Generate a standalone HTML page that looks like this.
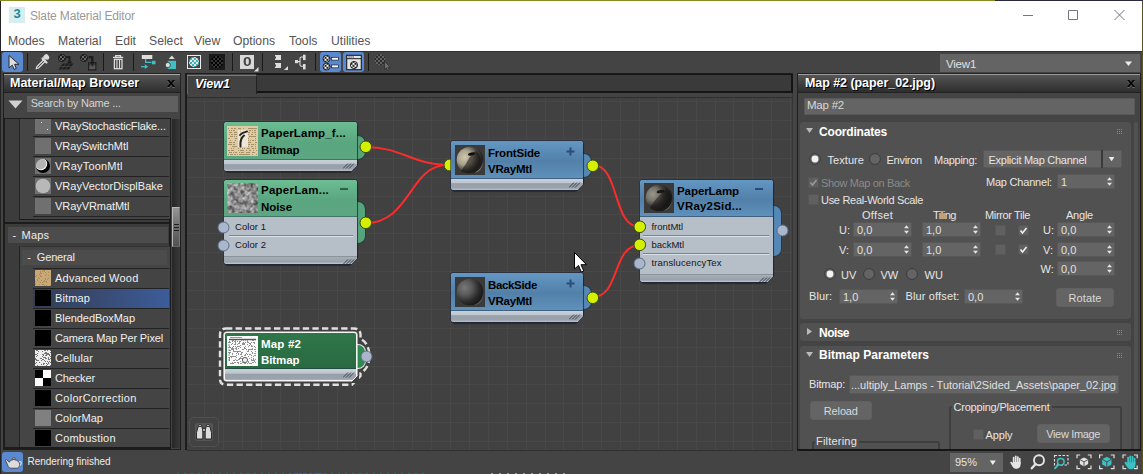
<!DOCTYPE html><html><head><meta charset="utf-8"><title>Slate Material Editor</title><style>
*{box-sizing:border-box;margin:0;padding:0}
html,body{width:1143px;height:474px;overflow:hidden;background:#444;font-family:"Liberation Sans",sans-serif;font-size:12px;color:#e6e6e6}
.a{position:absolute}
.t{position:absolute;white-space:nowrap;line-height:14px}
#top1{left:0;top:0;width:995px;height:1px;background:#8a8a22}
#top2{left:995px;top:0;width:148px;height:1px;background:#2a2a3a}
#title{left:1px;top:1px;width:1141px;height:50px;background:#fff}
#lb{left:0;top:1px;width:1px;height:473px;background:#222}
#rb{left:1142px;top:1px;width:1px;height:473px;background:#5a5222}
.menu{color:#555;font-size:12.2px;top:34px}
#toolbar{left:1px;top:51px;width:1141px;height:22px;background:#444;border-top:1px solid #303030}
.hdr{background:linear-gradient(#585858 0%,#484848 35%,#2e2e2e 100%);border:1px solid #222;color:#fff;font-weight:bold;font-size:12.5px;text-shadow:1px 1px 0 #000}
.inp{background:#646464;color:#ddd}
.row{left:33px;width:136px;height:18px;background:#444}
.sw{left:35px;width:16px;height:16px}
.lt{left:55px;color:#eee;font-size:12px}
</style></head><body>
<svg width="0" height="0" style="position:absolute"><defs><filter id="blur1" x="0" y="0" width="1" height="1"><feGaussianBlur stdDeviation="0.7"/></filter></defs></svg>
<div class="a" id="title"></div><div class="a" id="top1"></div><div class="a" id="top2"></div><div class="a" id="lb"></div><div class="a" id="rb"></div>
<div class="a" style="left:9px;top:7px;width:16px;height:16px;background:#d6eeee"></div><div class="t" style="left:13.500px;top:5.500px;color:#1a8a9c;font-weight:bold;font-size:13px;line-height:16px">3</div>
<div class="t" style="left:30px;top:8px;color:#999;font-size:12px;line-height:16px;letter-spacing:-0.150px">Slate Material Editor</div>
<svg class="a" style="left:1015px;top:5px" width="120" height="20" viewBox="0 0 120 20"><path d="M8 10.500h10M53.500 5.500h9v9h-9zM99.500 5l10 10M109.500 5l-10 10" stroke="#777" stroke-width="1" fill="none"/></svg>
<div class="t menu" style="left:8px">Modes</div>
<div class="t menu" style="left:58px">Material</div>
<div class="t menu" style="left:115px">Edit</div>
<div class="t menu" style="left:149px">Select</div>
<div class="t menu" style="left:194px">View</div>
<div class="t menu" style="left:233px">Options</div>
<div class="t menu" style="left:289px">Tools</div>
<div class="t menu" style="left:331px">Utilities</div>
<div class="a" id="toolbar"></div>
<div class="a" style="left:2px;top:52px;width:21px;height:20px;background:#5b89cf;border-radius:3px"></div>
<svg class="a" style="left:2px;top:52px" width="21" height="20" viewBox="0 0 21 20"><path d="M7 3.500V16l3.300-2.800 1.800 4.200 2.200-1-1.800-4.100H17z" fill="#dedede" stroke="#2a2a2a" stroke-width="1" stroke-linejoin="round"/></svg>
<div class="a" style="left:26.5px;top:53px;width:1.600px;height:18px;background:#1a1a1a"></div>
<div class="a" style="left:102.5px;top:53px;width:1.600px;height:18px;background:#1a1a1a"></div>
<div class="a" style="left:132.5px;top:53px;width:1.600px;height:18px;background:#1a1a1a"></div>
<div class="a" style="left:231.5px;top:53px;width:1.600px;height:18px;background:#1a1a1a"></div>
<div class="a" style="left:261.5px;top:53px;width:1.600px;height:18px;background:#1a1a1a"></div>
<div class="a" style="left:314.5px;top:53px;width:1.600px;height:18px;background:#1a1a1a"></div>
<div class="a" style="left:367.5px;top:53px;width:1.600px;height:18px;background:#1a1a1a"></div>
<svg class="a" style="left:34px;top:53px" width="18" height="18" viewBox="0 0 18 18"><path d="M2.200 15.800l.8-2.300 6.500-6.500 1.500 1.500-6.500 6.500z" fill="#3a3a3a" stroke="#dcdcdc" stroke-width="1.200" stroke-linejoin="round"/><path d="M8.500 5.500l4 4" stroke="#dcdcdc" stroke-width="2.200" stroke-linecap="round"/><path d="M11 6.800l2.600-2.600a1.800 1.800 0 0 0-2.600-2.600L8.900 4z" fill="#dcdcdc"/><circle cx="13" cy="4.500" r="2.300" fill="#dcdcdc"/></svg>
<svg class="a" style="left:57px;top:53px" width="18" height="18" viewBox="0 0 18 18"><defs><pattern id="ck0" width="4" height="4" patternUnits="userSpaceOnUse" x="1" y="1"><rect width="4" height="4" fill="#1e1e1e"/><rect width="2" height="2" fill="#6a6a6a"/><rect x="2" y="2" width="2" height="2" fill="#6a6a6a"/></pattern></defs><circle cx="5" cy="5" r="3.600" fill="url(#ck0)" stroke="#1e1e1e" stroke-width="1"/><path d="M9 3h4.500v5.500h1.800l-2.800 3.500-2.800-3.500h1.800v-3.500h-2.500z" fill="#1e1e1e"/><path d="M6 10.500h10.500l-4.500 6h-10.500z" fill="#1e1e1e"/><path d="M3.800 13.500h10.500M9 10.500l-4.500 6M12.800 10.500l-4.500 6" stroke="#484848" stroke-width="0.800"/></svg>
<svg class="a" style="left:79px;top:53px" width="18" height="18" viewBox="0 0 18 18"><circle cx="5" cy="5" r="3.600" fill="url(#ck0)" stroke="#1e1e1e" stroke-width="1"/><path d="M9.500 3h5v6h1.800l-3 3.800-3-3.800h1.800v-3.800h-2.600z" fill="#1e1e1e"/><path d="M9.700 9v7.800h7v-7.800" fill="none" stroke="#1e1e1e" stroke-width="1.400"/><path d="M10.300 12l3 2.500 3-2.500v4.200h-6z" fill="#5a5a5a"/></svg>
<svg class="a" style="left:110px;top:52px" width="16" height="20" viewBox="110 52 16 20"><path d="M115.700 57v-1.300h4.800v1.300M113 57.400h10.200" fill="none" stroke="#dcdcdc" stroke-width="1.300"/><rect x="114.400" y="59.300" width="7.600" height="9.400" fill="none" stroke="#dcdcdc" stroke-width="1.300"/><path d="M116.900 59.500v9M119.500 59.500v9" stroke="#dcdcdc" stroke-width="1.100"/></svg>
<svg class="a" style="left:139px;top:52px" width="19" height="20" viewBox="139 52 19 20"><rect x="141.800" y="55" width="10.500" height="4" fill="#dcdcdc"/><path d="M145.600 59v3.400h6" fill="none" stroke="#3cc0c4" stroke-width="1.200"/><rect x="152" y="60.800" width="3.500" height="3.500" fill="#3cc0c4"/><path d="M141 66.700h5" stroke="#3cc0c4" stroke-width="1.300"/><path d="M144.800 64.300l3.500 2.400-3.500 2.400z" fill="#3cc0c4"/></svg>
<svg class="a" style="left:163px;top:52px" width="15" height="20" viewBox="163 52 15 20"><path d="M171.800 55.500l3 3.500h-6z" fill="#dcdcdc"/><rect x="167.800" y="60.800" width="8.200" height="8.200" fill="#3cc0c4"/><circle cx="167.800" cy="65" r="2.600" fill="#dcdcdc" stroke="#333" stroke-width="0.800"/></svg>
<div class="a" style="left:187px;top:55px;width:14px;height:14px;background:#424242;border:1px solid #ececec"></div>
<svg class="a" style="left:187px;top:55px" width="14" height="14" viewBox="0 0 14 14"><defs><pattern id="ck1" width="4" height="4" patternUnits="userSpaceOnUse" x="1" y="1"><rect width="4" height="4" fill="#f0dedc"/><rect width="2" height="2" fill="#2cbcc6"/><rect x="2" y="2" width="2" height="2" fill="#2cbcc6"/></pattern></defs><circle cx="7" cy="7" r="5" fill="url(#ck1)"/></svg>
<div class="a" style="left:209px;top:54px;width:16px;height:16px;background:#1a1a1a"></div>
<svg class="a" style="left:209px;top:54px" width="16" height="16" viewBox="0 0 16 16"><defs><pattern id="ck2" width="4" height="4" patternUnits="userSpaceOnUse"><rect width="4" height="4" fill="#000"/><rect width="2" height="2" fill="#363636"/><rect x="2" y="2" width="2" height="2" fill="#363636"/></pattern></defs><circle cx="8" cy="8" r="6.200" fill="url(#ck2)"/></svg>
<div class="a" style="left:240px;top:55px;width:14px;height:14px;background:#d8d8d8"></div>
<div class="t" style="left:243px;top:55px;color:#444;font-weight:bold;font-size:13.500px;line-height:14px;transform:scaleX(1.150);transform-origin:0 0">0</div>
<svg class="a" style="left:254px;top:67px" width="5" height="5"><path d="M4.500 0v4.500h-4.500z" fill="#dcdcdc"/></svg>
<svg class="a" style="left:272px;top:53px" width="18" height="18" viewBox="0 0 18 18"><rect x="3" y="2" width="6" height="5" fill="#ddd"/><rect x="3" y="10" width="6" height="5" fill="#ddd"/><rect x="2" y="3.500" width="2" height="2" fill="#444"/><rect x="2" y="11.500" width="2" height="2" fill="#444"/><path d="M16 13v4h-4z" fill="#ddd"/></svg>
<svg class="a" style="left:293px;top:52px" width="16" height="20" viewBox="293 52 16 20"><rect x="295" y="60" width="3" height="3.200" fill="#dcdcdc"/><path d="M298 61.600h1.500M303 57h-1.500q-1.500 0-1.500 1.500v6.200q0 1.500 1.500 1.500h1.500" fill="none" stroke="#dcdcdc" stroke-width="1.100"/><rect x="303" y="54.700" width="2.600" height="5.400" fill="#dcdcdc"/><rect x="303" y="64" width="2.600" height="5.400" fill="#dcdcdc"/></svg>
<div class="a" style="left:320px;top:52px;width:21px;height:20px;background:#5b89cf;border-radius:3px"></div>
<svg class="a" style="left:320px;top:52px" width="21" height="20" viewBox="320 52 21 20"><defs><pattern id="ck3" width="4" height="4" patternUnits="userSpaceOnUse" x="0.500" y="0.800"><rect width="4" height="4" fill="#fff"/><rect width="2" height="2" fill="#1c1c1c"/><rect x="2" y="2" width="2" height="2" fill="#1c1c1c"/></pattern></defs><circle cx="326.500" cy="58.800" r="3.500" fill="url(#ck3)" stroke="#1c1c1c" stroke-width="0.900"/><circle cx="326.500" cy="66.600" r="3.500" fill="url(#ck3)" stroke="#1c1c1c" stroke-width="0.900"/><rect x="331.500" y="57.300" width="7" height="2.800" fill="#fff" stroke="#1c1c1c" stroke-width="0.700"/><rect x="331.500" y="65" width="7" height="2.800" fill="#fff" stroke="#1c1c1c" stroke-width="0.700"/></svg>
<div class="a" style="left:343px;top:52px;width:21px;height:20px;background:#5b89cf;border-radius:3px"></div>
<svg class="a" style="left:343px;top:52px" width="21" height="20" viewBox="343 52 21 20"><rect x="346.700" y="55.300" width="14.600" height="14.400" fill="#e4e4e4" stroke="#1c1c1c" stroke-width="1.100"/><path d="M346.700 58.700h14.600" stroke="#1c1c1c" stroke-width="1"/><path d="M348.500 57h1.200M350.500 57h1.200M352.500 57h1.200" stroke="#1c1c1c" stroke-width="1"/><circle cx="354" cy="65" r="3.600" fill="url(#ck3)" stroke="#1c1c1c" stroke-width="0.900"/></svg>
<svg class="a" style="left:372px;top:52px" width="22" height="20" viewBox="372 52 22 20"><defs><pattern id="ck4" width="4" height="4" patternUnits="userSpaceOnUse"><rect width="4" height="4" fill="#636363"/><rect width="2" height="2" fill="#2c2c2c"/><rect x="2" y="2" width="2" height="2" fill="#2c2c2c"/></pattern></defs><circle cx="380" cy="59.800" r="5.500" fill="url(#ck4)"/><path d="M384.500 61.500v8l1.900-1.600 1.300 2.800 1.500-.7-1.300-2.700h2.600z" fill="#6e6e6e" stroke="#303030" stroke-width="0.800"/></svg>
<div class="a" style="left:940px;top:54px;width:200px;height:18px;background:#646464"></div>
<div class="t" style="left:946px;top:57px;color:#e0e0e0;font-size:11.500px;letter-spacing:-0.2px">View1</div>
<svg class="a" style="left:1124px;top:61px" width="9" height="6"><path d="M1 0.500h7l-3.500 4.500z" fill="#eee"/></svg>
<div class="a" style="left:3px;top:74px;width:178px;height:376px;background:#444;border:1px solid #1e1e1e"></div>
<div class="a hdr" style="left:3px;top:73px;width:178px;height:20px"></div>
<div class="a" style="left:4px;top:74px;width:176px;height:1px;background:#a8a8a8"></div>
<div class="t" style="left:10px;top:76px;color:#fff;font-weight:bold;font-size:12.500px;text-shadow:1px 1px 0 #000;line-height:15px">Material/Map Browser</div>
<div class="t" style="left:167.300px;top:76px;color:#000;font-weight:bold;font-size:12px;text-shadow:0 1px 0 #666;line-height:15px;transform:scaleX(1.230);transform-origin:0 0">x</div>
<svg class="a" style="left:7.500px;top:99.500px" width="15" height="9"><path d="M0.500 0.500h14l-7 8z" fill="#d0d0d0"/></svg>
<div class="a" style="left:27px;top:96px;width:151px;height:16px;background:#606060"></div>
<div class="t" style="left:30.7px;top:95px;line-height:16px;font-size:11px;color:#d4d4d4;letter-spacing:-0.23px;">Search by Name ...</div>
<div class="a" style="left:4px;top:118px;width:167px;height:331px;background:#3c3c3c;border:1px solid #1c1c1c;border-right:2px solid #1c1c1c"></div>
<div class="a" style="left:172px;top:119px;width:8px;height:329px;background:linear-gradient(90deg,#262626,#3a3a3a)"></div>
<div class="a" style="left:172px;top:207px;width:8px;height:40px;background:linear-gradient(#949494,#6e6e6e 50%,#525252);border:1px solid #b8b8b8;border-right-color:#777;border-bottom-color:#666"></div>
<div class="a" style="left:174px;top:224px;width:5px;height:1px;background:#1e1e1e"></div><div class="a" style="left:174px;top:227px;width:5px;height:1px;background:#1e1e1e"></div><div class="a" style="left:174px;top:230px;width:5px;height:1px;background:#1e1e1e"></div>
<div class="a" style="left:19px;top:119px;width:151px;height:101px;background:#454545;border-left:1px solid #222;border-bottom:1px solid #1c1c1c"></div>
<div class="a" style="left:33px;top:117px;width:136px;height:20px;background:#444;border-bottom:1px solid #222"></div>
<div class="a sw" style="top:118px;background:#707070"></div>
<div class="t" style="left:55px;top:118px;line-height:16px;font-size:11px;color:#f0f0f0;letter-spacing:-0.13px;">VRayStochasticFlake...</div>
<div class="a" style="left:33px;top:137px;width:136px;height:20px;background:#444;border-bottom:1px solid #222"></div>
<div class="a sw" style="top:138px;background:#707070"></div>
<div class="t" style="left:55px;top:138px;line-height:16px;font-size:11px;color:#f0f0f0;letter-spacing:-0.05px;">VRaySwitchMtl</div>
<div class="a" style="left:33px;top:157px;width:136px;height:20px;background:#444;border-bottom:1px solid #222"></div>
<div class="a sw" style="top:158px;background:#707070"></div>
<div class="t" style="left:55px;top:158px;line-height:16px;font-size:11px;color:#f0f0f0;letter-spacing:0.2px;">VRayToonMtl</div>
<div class="a" style="left:33px;top:177px;width:136px;height:20px;background:#444;border-bottom:1px solid #222"></div>
<div class="a sw" style="top:178px;background:#707070"></div>
<div class="t" style="left:55px;top:178px;line-height:16px;font-size:11px;color:#f0f0f0;letter-spacing:0.02px;">VRayVectorDisplBake</div>
<div class="a" style="left:33px;top:197px;width:136px;height:20px;background:#444;border-bottom:1px solid #222"></div>
<div class="a sw" style="top:198px;background:#707070"></div>
<div class="t" style="left:55px;top:198px;line-height:16px;font-size:11px;color:#f0f0f0;letter-spacing:-0.06px;">VRayVRmatMtl</div>
<div class="a" style="left:20px;top:114px;width:150px;height:4px;background:#444"></div>
<div class="a" style="left:4px;top:118px;width:167px;height:1px;background:#1c1c1c"></div>
<div class="a" style="left:41px;top:122px;width:1px;height:1px;background:#fff"></div><div class="a" style="left:47px;top:129px;width:1px;height:1px;background:#fff"></div>
<svg class="a" style="left:35px;top:158px" width="16" height="16"><defs><clipPath id="tc"><circle cx="8" cy="8" r="7"/></clipPath></defs><circle cx="8" cy="8" r="7" fill="#000"/><g clip-path="url(#tc)"><circle cx="6" cy="6" r="6.200" fill="#f4f4f4"/><circle cx="5.600" cy="5.600" r="5.600" fill="#b4b4b4"/></g></svg>
<svg class="a" style="left:35px;top:178px" width="16" height="16"><circle cx="8" cy="8" r="7.300" fill="#b8b8b8"/></svg>
<div class="a" style="left:5px;top:222px;width:165px;height:2px;background:#1c1c1c"></div>
<div class="a" style="left:8px;top:227px;width:160px;height:16px;background:#4c4c4c"></div>
<div class="t" style="left:12.5px;top:227px;line-height:16px;font-size:11px;color:#eee;">-</div>
<div class="t" style="left:21.6px;top:227px;line-height:16px;font-size:11px;color:#eee;letter-spacing:0.2px;">Maps</div>
<div class="a" style="left:19px;top:246px;width:151px;height:202px;background:#454545;border-left:1px solid #222;border-top:1px solid #333"></div>
<div class="a" style="left:22px;top:250px;width:145px;height:15px;background:#4c4c4c"></div>
<div class="t" style="left:27.3px;top:249px;line-height:16px;font-size:11px;color:#eee;">-</div>
<div class="t" style="left:36.8px;top:249px;line-height:16px;font-size:11px;color:#eee;letter-spacing:-0.16px;">General</div>
<div class="a" style="left:33px;top:268px;width:136px;height:20px;background:#444;border-top:1px solid #222"></div>
<div class="a sw" style="top:270px;background:#c9a878"></div>
<div class="t" style="left:55px;top:270px;line-height:16px;font-size:11px;color:#f0f0f0;letter-spacing:0.23px;">Advanced Wood</div>
<div class="a" style="left:33px;top:288px;width:136px;height:20px;background:linear-gradient(90deg,#343e54,#38486c 40%,#3c5c9a);border-top:1px solid #222"></div>
<div class="a sw" style="top:290px;background:#000"></div>
<div class="t" style="left:55px;top:290px;line-height:16px;font-size:11px;color:#f0f0f0;letter-spacing:0.13px;">Bitmap</div>
<div class="a" style="left:33px;top:308px;width:136px;height:20px;background:#444;border-top:1px solid #222"></div>
<div class="a sw" style="top:310px;background:#000"></div>
<div class="t" style="left:55px;top:310px;line-height:16px;font-size:11px;color:#f0f0f0;letter-spacing:-0.06px;">BlendedBoxMap</div>
<div class="a" style="left:33px;top:328px;width:136px;height:20px;background:#444;border-top:1px solid #222"></div>
<div class="a sw" style="top:330px;background:#000"></div>
<div class="t" style="left:55px;top:330px;line-height:16px;font-size:11px;color:#f0f0f0;letter-spacing:-0.13px;">Camera Map Per Pixel</div>
<div class="a" style="left:33px;top:348px;width:136px;height:20px;background:#444;border-top:1px solid #222"></div>
<div class="a sw" style="top:350px;background:#ececec"></div>
<div class="t" style="left:55px;top:350px;line-height:16px;font-size:11px;color:#f0f0f0;letter-spacing:0.09px;">Cellular</div>
<div class="a" style="left:33px;top:368px;width:136px;height:20px;background:#444;border-top:1px solid #222"></div>
<div class="a sw" style="top:370px;background:#000"></div>
<div class="t" style="left:55px;top:370px;line-height:16px;font-size:11px;color:#f0f0f0;letter-spacing:-0.14px;">Checker</div>
<div class="a" style="left:33px;top:388px;width:136px;height:20px;background:#444;border-top:1px solid #222"></div>
<div class="a sw" style="top:390px;background:#000"></div>
<div class="t" style="left:55px;top:390px;line-height:16px;font-size:11px;color:#f0f0f0;letter-spacing:0.31px;">ColorCorrection</div>
<div class="a" style="left:33px;top:408px;width:136px;height:20px;background:#444;border-top:1px solid #222"></div>
<div class="a sw" style="top:410px;background:#808080"></div>
<div class="t" style="left:55px;top:410px;line-height:16px;font-size:11px;color:#f0f0f0;letter-spacing:0.04px;">ColorMap</div>
<div class="a" style="left:33px;top:428px;width:136px;height:19px;background:#444;border-top:1px solid #222"></div>
<div class="a sw" style="top:430px;background:#000"></div>
<div class="t" style="left:55px;top:430px;line-height:16px;font-size:11px;color:#f0f0f0;letter-spacing:0.2px;">Combustion</div>
<div class="a" style="left:43px;top:370px;width:8px;height:8px;background:#fff"></div><div class="a" style="left:35px;top:378px;width:8px;height:8px;background:#fff"></div>
<svg class="a" style="left:35px;top:350px" width="16" height="16" shape-rendering="crispEdges"><path d="M7 4.5h1M11 15.5h1M2 0.5h1M15 8.5h1M7 6.5h1M15 15.5h1M12 4.5h1M7 4.5h1M12 0.5h1M2 5.5h1M1 9.5h1M0 8.5h1M15 12.5h1M13 12.5h1M14 4.5h1M11 3.5h1M1 4.5h1M15 6.5h1M8 13.5h1M9 13.5h1M12 11.5h1M13 7.5h1M10 0.5h1M8 5.5h1M10 3.5h1M6 8.5h1M9 3.5h1M2 15.5h1M15 2.5h1M11 2.5h1M13 4.5h1M0 9.5h1M13 13.5h1M3 1.5h1M1 12.5h1M10 8.5h1M7 1.5h1M9 0.5h1M2 3.5h1M1 6.5h1M13 9.5h1M8 4.5h1M1 10.5h1M10 11.5h1M4 12.5h1M12 14.5h1M12 3.5h1M8 13.5h1M7 9.5h1M13 8.5h1M9 10.5h1M0 13.5h1M10 0.5h1M12 4.5h1M1 10.5h1M14 11.5h1M11 8.5h1M15 0.5h1M1 0.5h1M11 8.5h1M14 9.5h1M10 5.5h1M11 5.5h1M10 11.5h1M8 9.5h1M12 3.5h1M0 4.5h1M9 7.5h1M8 7.5h1M10 5.5h1M13 3.5h1M3 10.5h1M10 7.5h1M14 5.5h1M2 10.5h1M6 14.5h1M8 7.5h1M3 1.5h1M6 10.5h1M5 8.5h1M10 2.5h1M11 4.5h1M13 9.5h1M8 14.5h1M11 13.5h1" stroke="#777" stroke-width="1"/></svg>
<svg class="a" style="left:35px;top:270px" width="16" height="16" shape-rendering="crispEdges"><path d="M8 11.5h1M0 14.5h1M7 1.5h1M5 3.5h1M11 15.5h1M7 12.5h1M3 7.5h1M0 6.5h1M13 8.5h1M5 12.5h1M5 2.5h1M4 14.5h1M4 4.5h1M0 0.5h1M6 6.5h1M5 5.5h1M9 10.5h1M6 6.5h1M5 6.5h1M12 9.5h1M0 11.5h1M13 5.5h1M4 8.5h1M2 10.5h1M9 0.5h1M10 2.5h1M9 11.5h1M9 15.5h1M10 5.5h1M15 15.5h1M5 1.5h1M8 0.5h1M11 12.5h1M0 13.5h1M11 12.5h1M0 14.5h1M1 5.5h1M6 3.5h1M7 14.5h1M11 11.5h1M8 14.5h1M3 11.5h1M9 1.5h1M13 2.5h1M6 10.5h1M11 4.5h1M10 8.5h1M2 9.5h1M10 9.5h1M5 2.5h1" stroke="#b08a58" stroke-width="1"/></svg>
<div class="a" style="left:4px;top:447px;width:167px;height:2px;background:#1c1c1c"></div>
<div class="a" style="left:185px;top:73px;width:608px;height:378px;background:#444;border:1px solid #1c1c1c;border-left:2px solid #1c1c1c;border-right-color:#363636;border-bottom-color:#2c2c2c"></div>
<div class="a" style="left:256px;top:74px;width:537px;height:19px;background:#3a3a3a;border:1px solid #151515;border-width:1px 2px 2px 1px"></div>
<div class="a" style="left:187px;top:75px;width:70px;height:19px;background:#424242;border-top:1px solid #7a7a7a;border-left:1px solid #666;border-right:1px solid #222"></div>
<div class="t" style="left:195px;top:76px;line-height:16px;font-size:12.5px;color:#fff;letter-spacing:0.01px;font-weight:bold;font-style:italic;text-shadow:1px 1px 0 #000;">View1</div>
<div class="a" style="left:187px;top:97px;width:606px;height:1px;background:#2e2e2e"></div>
<svg class="a" style="left:187px;top:98px;background:#414141" width="605" height="352" shape-rendering="crispEdges"><path d="M17.5 0V352M36.5 0V352M55.5 0V352M74.5 0V352M93.5 0V352M112.5 0V352M131.5 0V352M150.5 0V352M168.5 0V352M187.5 0V352M206.5 0V352M225.5 0V352M244.5 0V352M263.5 0V352M282.5 0V352M301.5 0V352M320.5 0V352M339.5 0V352M358.5 0V352M376.5 0V352M395.5 0V352M414.5 0V352M433.5 0V352M452.5 0V352M471.5 0V352M490.5 0V352M509.5 0V352M528.5 0V352M546.5 0V352M565.5 0V352M584.5 0V352M603.5 0V352M0 3.5H605M0 22.5H605M0 41.5H605M0 60.5H605M0 79.5H605M0 98.5H605M0 116.5H605M0 135.5H605M0 154.5H605M0 173.5H605M0 192.5H605M0 211.5H605M0 230.5H605M0 249.5H605M0 268.5H605M0 286.5H605M0 305.5H605M0 324.5H605M0 343.5H605" stroke="#484848" stroke-width="1" fill="none"/></svg>
<svg class="a" style="left:187px;top:98px" width="605" height="352" viewBox="187 98 605 352"><g fill="none" stroke="#fb2c2c" stroke-width="2"><path d="M366 147C400 147 415 165 447 165"/><path d="M366 223C410 223 410 165 447 165"/><path d="M593 165C620 165 612 227 640 227"/><path d="M593 297C620 297 612 245 640 245"/></g></svg>
<div class="a" style="left:356px;top:135px;width:10px;height:25px;background:#55a47e;border-radius:0 8px 8px 0;border:1px solid #2a3a3a;border-left:none"></div>
<div class="a" style="left:224px;top:122px;width:133px;height:49px;border-radius:3px;background:#b6bec8;overflow:hidden;box-shadow:0 0 0 1px rgba(28,36,64,.55),1px 2px 1px rgba(0,0,0,.35);"><div class="a" style="left:0;top:0;width:133px;height:38px;background:linear-gradient(#6cbd94 0,#5aa680 55%,#5ca781 100%);border-bottom:1px solid rgba(20,30,50,.45)"></div><div class="a" style="left:0;top:38px;width:133px;height:11px;background:linear-gradient(#c8d0da 0,#bec6d0 35%,#98a0aa 42%,#9aa2ac 80%,#b8c0ca 100%)"></div><svg class="a" style="left:119px;top:41px" width="12" height="6"><path d="M0 5.500l5-5M3 5.500l5-5M6 5.500l5-5" stroke="#3a424c" stroke-width="1"/></svg></div><svg class="a" style="left:350px;top:164px" width="9" height="9"><path d="M9 0v9H0z" fill="#414141"/><path d="M7.500 1.500l-6 6" stroke="rgba(28,36,64,.6)" stroke-width="1"/></svg>
<svg class="a" style="left:227px;top:126px" width="31" height="30" viewBox="0 0 31 30"><rect width="31" height="30" fill="#e0cca2"/><rect x="11" y="4" width="10" height="17" fill="#ece6d6"/><rect x="7" y="1" width="1" height="28" fill="#d8c8a0"/><rect x="13" y="1" width="1" height="28" fill="#d8c8a0"/><rect x="22" y="1" width="1" height="28" fill="#d8c8a0"/><path d="M1 2.5h1M4 2.5h1M5 2.5h1M7 2.5h1M8 2.5h1M11 2.5h1M12 2.5h1M13 2.5h1M16 2.5h1M21 2.5h1M22 2.5h1M23 2.5h1M24 2.5h1M25 2.5h1M26 2.5h1M27 2.5h1M28 2.5h1M29 2.5h1M2 4.5h1M4 4.5h1M6 4.5h1M7 4.5h1M22 4.5h1M23 4.5h1M25 4.5h1M27 4.5h1M28 4.5h1M2 6.5h1M3 6.5h1M4 6.5h1M7 6.5h1M8 6.5h1M9 6.5h1M21 6.5h1M22 6.5h1M25 6.5h1M27 6.5h1M28 6.5h1M2 8.5h1M4 8.5h1M5 8.5h1M7 8.5h1M8 8.5h1M9 8.5h1M21 8.5h1M24 8.5h1M25 8.5h1M28 8.5h1M3 10.5h1M4 10.5h1M5 10.5h1M7 10.5h1M9 10.5h1M22 10.5h1M23 10.5h1M24 10.5h1M25 10.5h1M26 10.5h1M27 10.5h1M28 10.5h1M1 12.5h1M2 12.5h1M8 12.5h1M9 12.5h1M21 12.5h1M28 12.5h1M3 14.5h1M8 14.5h1M21 14.5h1M23 14.5h1M25 14.5h1M26 14.5h1M28 14.5h1M2 16.5h1M3 16.5h1M4 16.5h1M6 16.5h1M7 16.5h1M21 16.5h1M22 16.5h1M23 16.5h1M28 16.5h1M29 16.5h1M1 18.5h1M2 18.5h1M3 18.5h1M4 18.5h1M6 18.5h1M7 18.5h1M21 18.5h1M22 18.5h1M24 18.5h1M25 18.5h1M26 18.5h1M28 18.5h1M5 20.5h1M6 20.5h1M7 20.5h1M8 20.5h1M9 20.5h1M21 20.5h1M24 20.5h1M25 20.5h1M28 20.5h1M4 22.5h1M6 22.5h1M11 22.5h1M15 22.5h1M17 22.5h1M20 22.5h1M21 22.5h1M22 22.5h1M25 22.5h1M26 22.5h1M28 22.5h1M1 24.5h1M2 24.5h1M4 24.5h1M5 24.5h1M6 24.5h1M11 24.5h1M13 24.5h1M14 24.5h1M15 24.5h1M16 24.5h1M19 24.5h1M22 24.5h1M23 24.5h1M26 24.5h1M29 24.5h1M2 26.5h1M3 26.5h1M4 26.5h1M6 26.5h1M8 26.5h1M9 26.5h1M12 26.5h1M14 26.5h1M15 26.5h1M16 26.5h1M19 26.5h1M20 26.5h1M21 26.5h1M22 26.5h1M25 26.5h1M26 26.5h1M27 26.5h1M1 28.5h1M3 28.5h1M4 28.5h1M5 28.5h1M7 28.5h1M8 28.5h1M10 28.5h1M12 28.5h1M13 28.5h1M14 28.5h1M15 28.5h1M16 28.5h1M17 28.5h1M18 28.5h1M19 28.5h1M20 28.5h1M21 28.5h1M22 28.5h1M25 28.5h1M29 28.5h1" stroke="#957c56" stroke-width="1" opacity=".75" shape-rendering="crispEdges"/><path d="M13 9c2-2.500 5-3 7-3.500M17 9.500c-2.500 2-4 6-3.500 11" fill="none" stroke="#222" stroke-width="2" stroke-linecap="round"/></svg>
<div class="t" style="left:261px;top:125px;line-height:16px;font-size:11.5px;color:#000;letter-spacing:0.18px;font-weight:bold;">PaperLamp_f...</div>
<div class="t" style="left:261px;top:142px;line-height:16px;font-size:11.5px;color:#000;letter-spacing:-0.08px;font-weight:bold;">Bitmap</div>
<svg class="a" style="left:359.2px;top:140.2px" width="13.6" height="13.6"><circle cx="6.8" cy="6.8" r="5.8" fill="#d4f000" stroke="#3a4a10" stroke-width="1"/></svg>
<div class="a" style="left:356px;top:201px;width:10px;height:43px;background:#55a47e;border-radius:0 8px 8px 0;border:1px solid #2a3a3a;border-left:none"></div>
<div class="a" style="left:224px;top:180px;width:133px;height:84px;border-radius:3px;background:#b6bec8;overflow:hidden;box-shadow:0 0 0 1px rgba(28,36,64,.55),1px 2px 1px rgba(0,0,0,.35);"><div class="a" style="left:0;top:0;width:133px;height:37px;background:linear-gradient(#6cbd94 0,#5aa680 55%,#5ca781 100%);border-bottom:1px solid rgba(20,30,50,.45)"></div><div class="a" style="left:0;top:76px;width:133px;height:8px;background:linear-gradient(#7e8690 0,#a4acb6 1.5px,#99a1ab 75%,#c2cad4 100%)"></div><svg class="a" style="left:119px;top:79px" width="12" height="6"><path d="M0 5.500l5-5M3 5.500l5-5M6 5.500l5-5" stroke="#3a424c" stroke-width="1"/></svg></div><svg class="a" style="left:350px;top:257px" width="9" height="9"><path d="M9 0v9H0z" fill="#414141"/><path d="M7.500 1.500l-6 6" stroke="rgba(28,36,64,.6)" stroke-width="1"/></svg>
<svg class="a" style="left:227px;top:183px" width="31" height="30" viewBox="0 0 31 30"><defs><filter id="nz" x="0" y="0" width="1" height="1" color-interpolation-filters="sRGB"><feTurbulence type="fractalNoise" baseFrequency="0.22" numOctaves="2" seed="7"/><feColorMatrix type="matrix" values="1 0 0 0 0.05 1 0 0 0 0.05 1 0 0 0 0.05 0 0 0 0 1"/></filter></defs><rect width="31" height="30" fill="#909090"/><rect width="31" height="30" filter="url(#nz)"/></svg>
<div class="t" style="left:261px;top:182px;line-height:16px;font-size:11.5px;color:#000;letter-spacing:0.26px;font-weight:bold;">PaperLam...</div>
<div class="t" style="left:261px;top:199px;line-height:16px;font-size:11.5px;color:#000;letter-spacing:-0.06px;font-weight:bold;">Noise</div>
<div class="a" style="left:340px;top:188px;width:8px;height:2px;background:#2c6248"></div>
<div class="a" style="left:229px;top:235px;width:124px;height:2px;background:linear-gradient(#7c848e 50%,#d8e0e8 50%)"></div>
<div class="t" style="left:235px;top:219px;line-height:16px;font-size:9.5px;color:#151515;letter-spacing:0.05px;">Color 1</div>
<div class="t" style="left:235px;top:237px;line-height:16px;font-size:9.5px;color:#151515;letter-spacing:0.05px;">Color 2</div>
<svg class="a" style="left:217.0px;top:220.5px" width="13.0" height="13.0"><circle cx="6.5" cy="6.5" r="5.5" fill="#a9b6cc" stroke="#5a6a84" stroke-width="1"/></svg>
<svg class="a" style="left:217.0px;top:238.5px" width="13.0" height="13.0"><circle cx="6.5" cy="6.5" r="5.5" fill="#a9b6cc" stroke="#5a6a84" stroke-width="1"/></svg>
<svg class="a" style="left:359.2px;top:215.7px" width="13.6" height="13.6"><circle cx="6.8" cy="6.8" r="5.8" fill="#d4f000" stroke="#3a4a10" stroke-width="1"/></svg>
<svg class="a" style="left:443px;top:158px" width="14" height="14"><circle cx="7" cy="7" r="6" fill="#d4f000" stroke="#3a4a10" stroke-width="1"/></svg>
<div class="a" style="left:582px;top:153px;width:10px;height:25px;background:#5588b6;border-radius:0 8px 8px 0;border:1px solid #2a3a3a;border-left:none"></div>
<div class="a" style="left:451px;top:141px;width:132px;height:49px;border-radius:3px;background:#b6bec8;overflow:hidden;box-shadow:0 0 0 1px rgba(28,36,64,.55),1px 2px 1px rgba(0,0,0,.35);"><div class="a" style="left:0;top:0;width:132px;height:38px;background:linear-gradient(#6397c3 0,#5280a9 55%,#5f91ba 100%);border-bottom:1px solid rgba(20,30,50,.45)"></div><div class="a" style="left:0;top:38px;width:132px;height:11px;background:linear-gradient(#c8d0da 0,#bec6d0 35%,#98a0aa 42%,#9aa2ac 80%,#b8c0ca 100%)"></div><svg class="a" style="left:118px;top:41px" width="12" height="6"><path d="M0 5.500l5-5M3 5.500l5-5M6 5.500l5-5" stroke="#3a424c" stroke-width="1"/></svg></div><svg class="a" style="left:576px;top:183px" width="9" height="9"><path d="M9 0v9H0z" fill="#414141"/><path d="M7.500 1.500l-6 6" stroke="rgba(28,36,64,.6)" stroke-width="1"/></svg>
<svg class="a" style="left:454.5px;top:145px" width="30" height="30" viewBox="0 0 30 30"><defs><radialGradient id="f1" cx="0.30" cy="0.40" r="0.80"><stop offset="0" stop-color="#cfc7ae"/><stop offset="0.35" stop-color="#a8a08a"/><stop offset="0.62" stop-color="#4a473f"/><stop offset="0.85" stop-color="#1e1d1b"/><stop offset="1" stop-color="#141414"/></radialGradient></defs><rect width="30" height="30" fill="#3a3a3a"/><circle cx="15" cy="15" r="13.300" fill="url(#f1)"/><ellipse cx="16.500" cy="9" rx="3.600" ry="1.500" transform="rotate(-14 16.500 9)" fill="#0e0e0e"/><path d="M21 6c-3 3-6 5-8 9s-5 8-7 11c4 3 10 3 15-1s8-12 0-19z" fill="#0c0c0c" opacity=".55"/><path d="M27.500 13c1.500 6-2 12-8 14.500c6 0 10-8 8-14.500z" fill="#9a9888" opacity=".75"/></svg>
<div class="t" style="left:488px;top:145px;line-height:16px;font-size:11.5px;color:#000;letter-spacing:-0.19px;font-weight:bold;">FrontSide</div>
<div class="t" style="left:488px;top:161px;line-height:16px;font-size:11.5px;color:#000;letter-spacing:-0.2px;font-weight:bold;">VRayMtl</div>
<svg class="a" style="left:565.500px;top:146.500px" width="9" height="9"><path d="M4.500 0.500v8M0.500 4.500h8" stroke="#2a4c78" stroke-width="2"/></svg>
<svg class="a" style="left:586.2px;top:158.7px" width="13.6" height="13.6"><circle cx="6.8" cy="6.8" r="5.8" fill="#d4f000" stroke="#3a4a10" stroke-width="1"/></svg>
<div class="a" style="left:582px;top:285px;width:10px;height:25px;background:#5588b6;border-radius:0 8px 8px 0;border:1px solid #2a3a3a;border-left:none"></div>
<div class="a" style="left:451px;top:273px;width:132px;height:49px;border-radius:3px;background:#b6bec8;overflow:hidden;box-shadow:0 0 0 1px rgba(28,36,64,.55),1px 2px 1px rgba(0,0,0,.35);"><div class="a" style="left:0;top:0;width:132px;height:38px;background:linear-gradient(#6397c3 0,#5280a9 55%,#5f91ba 100%);border-bottom:1px solid rgba(20,30,50,.45)"></div><div class="a" style="left:0;top:38px;width:132px;height:11px;background:linear-gradient(#c8d0da 0,#bec6d0 35%,#98a0aa 42%,#9aa2ac 80%,#b8c0ca 100%)"></div><svg class="a" style="left:118px;top:41px" width="12" height="6"><path d="M0 5.500l5-5M3 5.500l5-5M6 5.500l5-5" stroke="#3a424c" stroke-width="1"/></svg></div><svg class="a" style="left:576px;top:315px" width="9" height="9"><path d="M9 0v9H0z" fill="#414141"/><path d="M7.500 1.500l-6 6" stroke="rgba(28,36,64,.6)" stroke-width="1"/></svg>
<svg class="a" style="left:454.5px;top:277px" width="30" height="30" viewBox="0 0 30 30"><defs><radialGradient id="f2" cx="0.30" cy="0.34" r="0.78"><stop offset="0" stop-color="#787878"/><stop offset="0.35" stop-color="#5a5a5a"/><stop offset="0.7" stop-color="#2a2a2a"/><stop offset="1" stop-color="#141414"/></radialGradient></defs><rect width="30" height="30" fill="#3a3a3a"/><circle cx="15" cy="15" r="13.300" fill="url(#f2)"/><path d="M27.800 14c1.200 6-2.500 12-9 14c7 .5 11-7.500 9-14z" fill="#707070" opacity=".55"/></svg>
<div class="t" style="left:488px;top:277px;line-height:16px;font-size:11.5px;color:#000;letter-spacing:-0.35px;font-weight:bold;">BackSide</div>
<div class="t" style="left:488px;top:293px;line-height:16px;font-size:11.5px;color:#000;letter-spacing:-0.2px;font-weight:bold;">VRayMtl</div>
<svg class="a" style="left:565.500px;top:278.500px" width="9" height="9"><path d="M4.500 0.500v8M0.500 4.500h8" stroke="#2a4c78" stroke-width="2"/></svg>
<svg class="a" style="left:586.2px;top:290.7px" width="13.6" height="13.6"><circle cx="6.8" cy="6.8" r="5.8" fill="#d4f000" stroke="#3a4a10" stroke-width="1"/></svg>
<div class="a" style="left:772px;top:205px;width:10px;height:52px;background:#5588b6;border-radius:0 8px 8px 0;border:1px solid #2a3a3a;border-left:none"></div>
<div class="a" style="left:640px;top:180px;width:133px;height:102px;border-radius:3px;background:#b6bec8;overflow:hidden;box-shadow:0 0 0 1px rgba(28,36,64,.55),1px 2px 1px rgba(0,0,0,.35);"><div class="a" style="left:0;top:0;width:133px;height:37px;background:linear-gradient(#6397c3 0,#5280a9 55%,#5f91ba 100%);border-bottom:1px solid rgba(20,30,50,.45)"></div><div class="a" style="left:0;top:94px;width:133px;height:8px;background:linear-gradient(#7e8690 0,#a4acb6 1.5px,#99a1ab 75%,#c2cad4 100%)"></div><svg class="a" style="left:119px;top:97px" width="12" height="6"><path d="M0 5.500l5-5M3 5.500l5-5M6 5.500l5-5" stroke="#3a424c" stroke-width="1"/></svg></div><svg class="a" style="left:766px;top:275px" width="9" height="9"><path d="M9 0v9H0z" fill="#414141"/><path d="M7.500 1.500l-6 6" stroke="rgba(28,36,64,.6)" stroke-width="1"/></svg>
<svg class="a" style="left:643.5px;top:183px" width="30" height="30" viewBox="0 0 30 30"><defs><radialGradient id="f3" cx="0.26" cy="0.36" r="0.80"><stop offset="0" stop-color="#9a978a"/><stop offset="0.30" stop-color="#77756c"/><stop offset="0.55" stop-color="#3a3936"/><stop offset="0.85" stop-color="#1c1c1c"/><stop offset="1" stop-color="#121212"/></radialGradient></defs><rect width="30" height="30" fill="#3a3a3a"/><circle cx="15" cy="15" r="13.300" fill="url(#f3)"/><ellipse cx="16.500" cy="8.500" rx="4" ry="1.600" transform="rotate(-12 16.500 8.500)" fill="#181818"/><path d="M22 6c-3 3-6 6-9 9s-5 7-7 10c4 3 10 3 15-1s8-11 1-18z" fill="#0c0c0c" opacity=".45"/><path d="M27.500 15c1 5-2 10-8 12.500c6 0 9.500-7 8-12.500z" fill="#8a8878" opacity=".6"/></svg>
<div class="t" style="left:677px;top:183px;line-height:16px;font-size:11.5px;color:#000;letter-spacing:-0.07px;font-weight:bold;">PaperLamp</div>
<div class="t" style="left:677px;top:197.5px;line-height:16px;font-size:11.5px;color:#000;letter-spacing:0.21px;font-weight:bold;">VRay2Sid...</div>
<div class="a" style="left:755px;top:188px;width:8px;height:2px;background:#2a4c78"></div>
<div class="a" style="left:643px;top:235px;width:126px;height:2px;background:linear-gradient(#7c848e 50%,#d8e0e8 50%)"></div>
<div class="a" style="left:643px;top:253px;width:126px;height:2px;background:linear-gradient(#7c848e 50%,#d8e0e8 50%)"></div>
<div class="t" style="left:651.5px;top:219px;line-height:16px;font-size:9.5px;color:#151515;letter-spacing:-0.02px;">frontMtl</div>
<div class="t" style="left:651.5px;top:237px;line-height:16px;font-size:9.5px;color:#151515;letter-spacing:-0.03px;">backMtl</div>
<div class="t" style="left:651.5px;top:255px;line-height:16px;font-size:9.5px;color:#151515;letter-spacing:0.13px;">translucencyTex</div>
<svg class="a" style="left:632.7px;top:220.2px" width="13.6" height="13.6"><circle cx="6.8" cy="6.8" r="5.8" fill="#d4f000" stroke="#3a4a10" stroke-width="1"/></svg>
<svg class="a" style="left:632.7px;top:238.2px" width="13.6" height="13.6"><circle cx="6.8" cy="6.8" r="5.8" fill="#d4f000" stroke="#3a4a10" stroke-width="1"/></svg>
<svg class="a" style="left:633.0px;top:256.5px" width="13.0" height="13.0"><circle cx="6.5" cy="6.5" r="5.5" fill="#a9b6cc" stroke="#5a6a84" stroke-width="1"/></svg>
<svg class="a" style="left:775.5px;top:224.0px" width="13.0" height="13.0"><circle cx="6.5" cy="6.5" r="5.5" fill="#a9b6cc" stroke="#5a6a84" stroke-width="1"/></svg>
<svg class="a" style="left:217px;top:325px" width="160" height="64" viewBox="217 325 160 64"><path d="M226 328.500H354Q360.500 328.500 360.500 335V339Q369 343 369.500 356Q369 369 360.500 373V376L352 384.800H226Q220 384.800 220 379V334.500Q220 328.500 226 328.500Z" fill="none" stroke="#e0e0e0" stroke-width="2.400" stroke-dasharray="6.300 3.300"/></svg>
<div class="a" style="left:356px;top:344px;width:10px;height:25px;background:#2f8a50;border-radius:0 8px 8px 0;border:1px solid #e8e8e8;border-left:none"></div>
<div class="a" style="left:224px;top:332px;width:133px;height:49px;border-radius:3px;background:#b6bec8;border:1px solid #f6f6f6;overflow:hidden;box-shadow:0 0 0 .6px #f0f0f0;"><div class="a" style="left:0;top:0;width:133px;height:36px;background:linear-gradient(#2e7649,#2a6a42);border-bottom:1px solid rgba(20,30,50,.45)"></div><div class="a" style="left:0;top:36px;width:133px;height:12px;background:linear-gradient(#c8d0da 0,#bec6d0 35%,#98a0aa 42%,#9aa2ac 80%,#b8c0ca 100%)"></div><svg class="a" style="left:118px;top:39px" width="12" height="6"><path d="M0 5.500l5-5M3 5.500l5-5M6 5.500l5-5" stroke="#3a424c" stroke-width="1"/></svg></div><svg class="a" style="left:350px;top:374px" width="9" height="9"><path d="M9 0v9H0z" fill="#414141"/><path d="M7.500 1.500l-6 6" stroke="#f6f6f6" stroke-width="1"/></svg>
<svg class="a" style="left:227px;top:336px" width="31" height="30" viewBox="0 0 31 30"><rect width="31" height="30" fill="#fafafa"/><path d="M2 3.500h27" stroke="#555" stroke-width="1.400"/><path d="M3 1.500h12" stroke="#999" stroke-width="1"/><path d="M5 4.5h1M6 4.5h1M8 4.5h1M14 4.5h1M16 4.5h1M18 4.5h1M20 4.5h1M25 4.5h1M26 4.5h1M2 5.5h1M5 5.5h1M7 5.5h1M8 5.5h1M10 5.5h1M12 5.5h1M13 5.5h1M20 5.5h1M2 6.5h1M3 6.5h1M8 6.5h1M12 6.5h1M16 6.5h1M18 6.5h1M20 6.5h1M21 6.5h1M24 6.5h1M26 6.5h1M27 6.5h1M5 7.5h1M8 7.5h1M11 7.5h1M12 7.5h1M15 7.5h1M16 7.5h1M17 7.5h1M22 7.5h1M23 7.5h1M27 7.5h1M4 8.5h1M7 8.5h1M8 8.5h1M10 8.5h1M15 8.5h1M16 8.5h1M17 8.5h1M20 8.5h1M23 8.5h1M13 9.5h1M22 9.5h1M24 9.5h1M2 10.5h1M6 10.5h1M8 10.5h1M10 10.5h1M11 10.5h1M12 10.5h1M18 10.5h1M21 10.5h1M24 10.5h1M25 10.5h1M27 10.5h1M2 11.5h1M3 11.5h1M5 11.5h1M9 11.5h1M13 11.5h1M17 11.5h1M28 11.5h1M4 12.5h1M5 12.5h1M6 12.5h1M8 12.5h1M9 12.5h1M11 12.5h1M17 12.5h1M18 12.5h1M25 12.5h1M4 13.5h1M5 13.5h1M6 13.5h1M9 13.5h1M15 13.5h1M16 13.5h1M19 13.5h1M21 13.5h1M22 13.5h1M23 13.5h1M24 13.5h1M25 13.5h1M27 13.5h1M28 13.5h1M2 14.5h1M3 14.5h1M6 14.5h1M21 14.5h1M6 15.5h1M7 15.5h1M8 15.5h1M9 15.5h1M10 15.5h1M11 15.5h1M12 15.5h1M13 15.5h1M20 15.5h1M21 15.5h1M24 15.5h1M28 15.5h1M2 16.5h1M3 16.5h1M10 16.5h1M14 16.5h1M15 16.5h1M25 16.5h1M2 17.5h1M5 17.5h1M9 17.5h1M11 17.5h1M14 17.5h1M19 17.5h1M25 17.5h1M27 17.5h1M28 17.5h1M5 18.5h1M11 18.5h1M13 18.5h1M14 18.5h1M18 18.5h1M20 18.5h1M22 18.5h1M23 18.5h1M9 19.5h1M17 19.5h1M18 19.5h1M24 19.5h1M27 19.5h1M28 19.5h1M3 20.5h1M4 20.5h1M5 20.5h1M6 20.5h1M7 20.5h1M8 20.5h1M14 20.5h1M15 20.5h1M21 20.5h1M26 20.5h1M2 21.5h1M4 21.5h1M9 21.5h1M13 21.5h1M24 21.5h1M2 22.5h1M12 22.5h1M13 22.5h1M14 22.5h1M15 22.5h1M17 22.5h1M19 22.5h1M22 22.5h1M26 22.5h1M2 23.5h1M8 23.5h1M11 23.5h1M12 23.5h1M15 23.5h1M18 23.5h1M24 23.5h1M26 23.5h1M28 23.5h1M2 24.5h1M6 24.5h1M7 24.5h1M9 24.5h1M10 24.5h1M18 24.5h1M19 24.5h1M24 24.5h1M25 24.5h1M26 24.5h1M27 24.5h1M13 25.5h1M16 25.5h1M17 25.5h1M19 25.5h1M21 25.5h1M27 25.5h1M5 26.5h1M7 26.5h1M8 26.5h1M10 26.5h1M11 26.5h1M15 26.5h1M16 26.5h1M21 26.5h1M25 26.5h1M26 26.5h1M28 26.5h1M3 27.5h1M4 27.5h1M5 27.5h1M6 27.5h1M11 27.5h1M13 27.5h1M14 27.5h1M17 27.5h1M18 27.5h1M20 27.5h1M22 27.5h1M23 27.5h1M24 27.5h1" stroke="#909090" stroke-width="1" shape-rendering="crispEdges"/><path d="M2 6v20" stroke="#777" stroke-width="1.500" stroke-dasharray="1 1.500"/><circle cx="18" cy="24" r="2.600" fill="#eee" stroke="#555" stroke-width=".9"/></svg>
<div class="t" style="left:261px;top:336px;line-height:16px;font-size:11.5px;color:#fff;letter-spacing:0.17px;font-weight:bold;">Map #2</div>
<div class="t" style="left:261px;top:352px;line-height:16px;font-size:11.5px;color:#fff;letter-spacing:-0.08px;font-weight:bold;">Bitmap</div>
<svg class="a" style="left:359.5px;top:349.5px" width="13.0" height="13.0"><circle cx="6.5" cy="6.5" r="5.5" fill="#a9b6cc" stroke="#5a6a84" stroke-width="1"/></svg>
<div class="a" style="left:189px;top:417px;width:30px;height:30px;border:1px solid #505050;border-radius:5px;background:#424242"></div>
<div class="a" style="left:195px;top:423px;width:18px;height:17.500px;border-radius:2px;background:#565656"></div>
<svg class="a" style="left:194px;top:422px" width="20" height="20" viewBox="194 422 20 20"><g fill="#dcdcdc" stroke="#1e1e1e" stroke-width="0.900" stroke-linejoin="round"><path d="M198.300 426.300h3.400l1.100 4v8.700h-6.300v-6.500z"/><path d="M206.300 426.300h3.400l1.800 6.200v6.500h-6.300v-8.700z"/><rect x="198.400" y="424.600" width="3.200" height="1.700" rx="0.800"/><rect x="206.400" y="424.600" width="3.200" height="1.700" rx="0.800"/><rect x="202.800" y="428.600" width="2.400" height="2.800" fill="#fff"/></g></svg>
<svg class="a" style="left:573px;top:251px" width="16" height="24" viewBox="0 0 16 24"><path d="M1.500 1.500V18l4-3.500 2.800 6.500 2.500-1-2.800-6.300H13.500z" fill="#fff" stroke="#000" stroke-width="1" stroke-linejoin="round"/></svg>
<div class="a" style="left:797px;top:73px;width:344px;height:377px;background:#444;border:1px solid #1e1e1e"></div>
<div class="a hdr" style="left:797px;top:73px;width:344px;height:20px"></div>
<div class="a" style="left:798px;top:74px;width:342px;height:1px;background:#9c9c9c"></div>
<div class="t" style="left:805px;top:75px;line-height:16px;font-size:12.5px;color:#fff;letter-spacing:-0.06px;font-weight:bold;text-shadow:1px 1px 0 #000;">Map #2 (paper_02.jpg)</div>
<div class="t" style="left:1126.800px;top:76px;color:#000;font-weight:bold;font-size:12px;text-shadow:0 1px 0 #666;line-height:15px;transform:scaleX(1.230);transform-origin:0 0">x</div>
<div class="a" style="left:1134px;top:122px;width:4px;height:340px;background:#515151;border-radius:2px"></div>
<div class="a" style="left:804px;top:98px;width:331px;height:17px;background:#646464;border:1px solid #585858;border-radius:1px"></div>
<div class="t" style="left:807px;top:97px;line-height:16px;font-size:11.5px;color:#d8d8d8;letter-spacing:-0.23px;">Map #2</div>
<div class="a" style="left:800px;top:122px;width:331px;height:197px;background:#515151;border-radius:3px"></div><svg class="a" style="left:806px;top:128px" width="8" height="6"><path d="M0 0h7l-3.500 5z" fill="#bbb"/></svg><div class="t" style="left:819px;top:123.5px;line-height:16px;font-size:12px;color:#fff;letter-spacing:-0.18px;font-weight:bold;">Coordinates</div><svg class="a" style="left:1117px;top:129px" width="6" height="6" shape-rendering="crispEdges"><rect x="0" y="0" width="1" height="1" fill="#8a8a8a"/><rect x="0" y="2" width="1" height="1" fill="#8a8a8a"/><rect x="0" y="4" width="1" height="1" fill="#8a8a8a"/><rect x="2" y="0" width="1" height="1" fill="#8a8a8a"/><rect x="2" y="2" width="1" height="1" fill="#8a8a8a"/><rect x="2" y="4" width="1" height="1" fill="#8a8a8a"/><rect x="4" y="0" width="1" height="1" fill="#8a8a8a"/><rect x="4" y="2" width="1" height="1" fill="#8a8a8a"/><rect x="4" y="4" width="1" height="1" fill="#8a8a8a"/></svg>
<svg class="a" style="left:807.5px;top:152px" width="14" height="14"><circle cx="7" cy="7" r="5.400" fill="#646464" stroke="#3c3c3c" stroke-width="1"/><circle cx="7" cy="7" r="3.400" fill="#f2f2f2"/></svg>
<div class="t" style="left:827.5px;top:152px;line-height:16px;font-size:11px;color:#e6e6e6;letter-spacing:0.06px;">Texture</div>
<svg class="a" style="left:867.5px;top:151.5px" width="14" height="14"><circle cx="7" cy="7" r="5.400" fill="#646464" stroke="#3c3c3c" stroke-width="1"/></svg>
<div class="t" style="left:886.5px;top:152px;line-height:16px;font-size:11px;color:#e6e6e6;letter-spacing:-0.26px;">Environ</div>
<div class="t" style="left:934px;top:152px;line-height:16px;font-size:11px;color:#e6e6e6;letter-spacing:-0.28px;">Mapping:</div>
<div class="a" style="left:983px;top:150px;width:139px;height:18px;background:#646464;border:1px solid #585858;border-radius:1px"></div>
<div class="t" style="left:988.5px;top:152px;line-height:16px;font-size:11px;color:#e6e6e6;letter-spacing:-0.27px;">Explicit Map Channel</div>
<div class="a" style="left:1101px;top:150px;width:2px;height:18px;background:#3a3a3a"></div>
<svg class="a" style="left:1108px;top:157px" width="8" height="6"><path d="M0.800 0h5.600l-2.800 4.200z" fill="#eee"/></svg>
<div class="a" style="left:808px;top:177.0px;width:11px;height:11px;background:#606060;border:1px solid #565656"></div><svg class="a" style="left:808px;top:177.0px" width="11" height="11"><path d="M2.500 5.500l2 2.500 4-5" fill="none" stroke="#999" stroke-width="1.600"/></svg>
<div class="t" style="left:821px;top:175px;line-height:16px;font-size:11px;color:#8a8a8a;letter-spacing:-0.36px;">Show Map on Back</div>
<div class="t" style="left:986px;top:174px;line-height:16px;font-size:11px;color:#e6e6e6;letter-spacing:-0.21px;">Map Channel:</div>
<div class="a" style="left:1057px;top:174px;width:58px;height:15px;background:#646464;border:1px solid #585858;border-radius:1px"></div><div class="t" style="left:1061px;top:174.0px;line-height:16px;font-size:11px;color:#e0e0e0;">1</div><svg class="a" style="left:1106px;top:176px" width="7" height="11" viewBox="0 0 7 11"><path d="M1 4.200h5l-2.500-3zM1 6.800h5l-2.500 3z" fill="#e4e4e4"/></svg>
<div class="a" style="left:808px;top:193.5px;width:11px;height:11px;background:#606060;border:1px solid #565656"></div>
<div class="t" style="left:821px;top:192px;line-height:16px;font-size:11px;color:#e6e6e6;letter-spacing:-0.3px;">Use Real-World Scale</div>
<div class="t" style="left:862px;top:207px;line-height:16px;font-size:11px;color:#e6e6e6;letter-spacing:0.31px;">Offset</div>
<div class="t" style="left:933px;top:207px;line-height:16px;font-size:11px;color:#e6e6e6;letter-spacing:-0.48px;">Tiling</div>
<div class="t" style="left:985px;top:207px;line-height:16px;font-size:11px;color:#e6e6e6;letter-spacing:-0.35px;">Mirror Tile</div>
<div class="t" style="left:1066px;top:207px;line-height:16px;font-size:11px;color:#e6e6e6;letter-spacing:-0.23px;">Angle</div>
<div class="t" style="left:839px;top:222px;line-height:16px;font-size:11px;color:#e6e6e6;">U:</div>
<div class="a" style="left:853px;top:222px;width:59px;height:15px;background:#646464;border:1px solid #585858;border-radius:1px"></div><div class="t" style="left:857px;top:222.0px;line-height:16px;font-size:11px;color:#e0e0e0;">0,0</div><svg class="a" style="left:903px;top:224px" width="7" height="11" viewBox="0 0 7 11"><path d="M1 4.200h5l-2.500-3zM1 6.800h5l-2.500 3z" fill="#e4e4e4"/></svg>
<div class="a" style="left:922px;top:222px;width:59px;height:15px;background:#646464;border:1px solid #585858;border-radius:1px"></div><div class="t" style="left:926px;top:222.0px;line-height:16px;font-size:11px;color:#e0e0e0;">1,0</div><svg class="a" style="left:972px;top:224px" width="7" height="11" viewBox="0 0 7 11"><path d="M1 4.200h5l-2.500-3zM1 6.800h5l-2.500 3z" fill="#e4e4e4"/></svg>
<div class="a" style="left:995px;top:224.5px;width:11px;height:11px;background:#606060;border:1px solid #565656"></div>
<div class="a" style="left:1018px;top:224.5px;width:11px;height:11px;background:#606060;border:1px solid #565656"></div><svg class="a" style="left:1018px;top:224.5px" width="11" height="11"><path d="M2.500 5.500l2 2.500 4-5" fill="none" stroke="#f0f0f0" stroke-width="1.600"/></svg>
<div class="t" style="left:1043px;top:222px;line-height:16px;font-size:11px;color:#e6e6e6;">U:</div>
<div class="a" style="left:1057px;top:222px;width:58px;height:15px;background:#646464;border:1px solid #585858;border-radius:1px"></div><div class="t" style="left:1061px;top:222.0px;line-height:16px;font-size:11px;color:#e0e0e0;">0,0</div><svg class="a" style="left:1106px;top:224px" width="7" height="11" viewBox="0 0 7 11"><path d="M1 4.200h5l-2.500-3zM1 6.800h5l-2.500 3z" fill="#e4e4e4"/></svg>
<div class="t" style="left:839px;top:241.5px;line-height:16px;font-size:11px;color:#e6e6e6;">V:</div>
<div class="a" style="left:853px;top:241.5px;width:59px;height:15px;background:#646464;border:1px solid #585858;border-radius:1px"></div><div class="t" style="left:857px;top:241.5px;line-height:16px;font-size:11px;color:#e0e0e0;">0,0</div><svg class="a" style="left:903px;top:243.5px" width="7" height="11" viewBox="0 0 7 11"><path d="M1 4.200h5l-2.500-3zM1 6.800h5l-2.500 3z" fill="#e4e4e4"/></svg>
<div class="a" style="left:922px;top:241.5px;width:59px;height:15px;background:#646464;border:1px solid #585858;border-radius:1px"></div><div class="t" style="left:926px;top:241.5px;line-height:16px;font-size:11px;color:#e0e0e0;">1,0</div><svg class="a" style="left:972px;top:243.5px" width="7" height="11" viewBox="0 0 7 11"><path d="M1 4.200h5l-2.500-3zM1 6.800h5l-2.500 3z" fill="#e4e4e4"/></svg>
<div class="a" style="left:995px;top:244.0px;width:11px;height:11px;background:#606060;border:1px solid #565656"></div>
<div class="a" style="left:1018px;top:244.0px;width:11px;height:11px;background:#606060;border:1px solid #565656"></div><svg class="a" style="left:1018px;top:244.0px" width="11" height="11"><path d="M2.500 5.500l2 2.500 4-5" fill="none" stroke="#f0f0f0" stroke-width="1.600"/></svg>
<div class="t" style="left:1043px;top:241.5px;line-height:16px;font-size:11px;color:#e6e6e6;">V:</div>
<div class="a" style="left:1057px;top:241.5px;width:58px;height:15px;background:#646464;border:1px solid #585858;border-radius:1px"></div><div class="t" style="left:1061px;top:241.5px;line-height:16px;font-size:11px;color:#e0e0e0;">0,0</div><svg class="a" style="left:1106px;top:243.5px" width="7" height="11" viewBox="0 0 7 11"><path d="M1 4.200h5l-2.500-3zM1 6.800h5l-2.500 3z" fill="#e4e4e4"/></svg>
<div class="t" style="left:1040.5px;top:261px;line-height:16px;font-size:11px;color:#e6e6e6;">W:</div>
<div class="a" style="left:1057px;top:261px;width:58px;height:15px;background:#646464;border:1px solid #585858;border-radius:1px"></div><div class="t" style="left:1061px;top:261.0px;line-height:16px;font-size:11px;color:#e0e0e0;">0,0</div><svg class="a" style="left:1106px;top:263px" width="7" height="11" viewBox="0 0 7 11"><path d="M1 4.200h5l-2.500-3zM1 6.800h5l-2.500 3z" fill="#e4e4e4"/></svg>
<svg class="a" style="left:822.5px;top:267px" width="14" height="14"><circle cx="7" cy="7" r="5.400" fill="#646464" stroke="#3c3c3c" stroke-width="1"/><circle cx="7" cy="7" r="3.400" fill="#f2f2f2"/></svg>
<div class="t" style="left:841px;top:266.5px;line-height:16px;font-size:11px;color:#e6e6e6;">UV</div>
<svg class="a" style="left:862px;top:267px" width="14" height="14"><circle cx="7" cy="7" r="5.400" fill="#646464" stroke="#3c3c3c" stroke-width="1"/></svg>
<div class="t" style="left:880.5px;top:266.5px;line-height:16px;font-size:11px;color:#e6e6e6;">VW</div>
<svg class="a" style="left:904.5px;top:267px" width="14" height="14"><circle cx="7" cy="7" r="5.400" fill="#646464" stroke="#3c3c3c" stroke-width="1"/></svg>
<div class="t" style="left:924.5px;top:266.5px;line-height:16px;font-size:11px;color:#e6e6e6;">WU</div>
<div class="t" style="left:809px;top:288px;line-height:16px;font-size:11px;color:#e6e6e6;letter-spacing:0.08px;">Blur:</div>
<div class="a" style="left:839px;top:289px;width:59px;height:15px;background:#646464;border:1px solid #585858;border-radius:1px"></div><div class="t" style="left:843px;top:289.0px;line-height:16px;font-size:11px;color:#e0e0e0;">1,0</div><svg class="a" style="left:889px;top:291px" width="7" height="11" viewBox="0 0 7 11"><path d="M1 4.200h5l-2.500-3zM1 6.800h5l-2.500 3z" fill="#e4e4e4"/></svg>
<div class="t" style="left:905.5px;top:288px;line-height:16px;font-size:11px;color:#e6e6e6;letter-spacing:0.14px;">Blur offset:</div>
<div class="a" style="left:964px;top:289px;width:59px;height:15px;background:#646464;border:1px solid #585858;border-radius:1px"></div><div class="t" style="left:968px;top:289.0px;line-height:16px;font-size:11px;color:#e0e0e0;">0,0</div><svg class="a" style="left:1014px;top:291px" width="7" height="11" viewBox="0 0 7 11"><path d="M1 4.200h5l-2.500-3zM1 6.800h5l-2.500 3z" fill="#e4e4e4"/></svg>
<div class="a" style="left:1056px;top:288px;width:58px;height:18.5px;background:#646464;border-radius:3px;border:1px solid #606060"></div><div class="t" style="left:1068.5px;top:289.75px;line-height:16px;font-size:11px;color:#dadada;letter-spacing:0.1px;">Rotate</div>
<div class="a" style="left:800px;top:323px;width:331px;height:18px;background:#515151;border-radius:3px"></div><svg class="a" style="left:807px;top:328px" width="6" height="8"><path d="M0 0v7l5-3.500z" fill="#bbb"/></svg><div class="t" style="left:819px;top:324.5px;line-height:16px;font-size:12px;color:#fff;letter-spacing:-0.54px;font-weight:bold;">Noise</div><svg class="a" style="left:1117px;top:330px" width="6" height="6" shape-rendering="crispEdges"><rect x="0" y="0" width="1" height="1" fill="#8a8a8a"/><rect x="0" y="2" width="1" height="1" fill="#8a8a8a"/><rect x="0" y="4" width="1" height="1" fill="#8a8a8a"/><rect x="2" y="0" width="1" height="1" fill="#8a8a8a"/><rect x="2" y="2" width="1" height="1" fill="#8a8a8a"/><rect x="2" y="4" width="1" height="1" fill="#8a8a8a"/><rect x="4" y="0" width="1" height="1" fill="#8a8a8a"/><rect x="4" y="2" width="1" height="1" fill="#8a8a8a"/><rect x="4" y="4" width="1" height="1" fill="#8a8a8a"/></svg>
<div class="a" style="left:800px;top:345.5px;width:331px;height:104px;background:#515151;border-radius:3px"></div><svg class="a" style="left:806px;top:351.5px" width="8" height="6"><path d="M0 0h7l-3.500 5z" fill="#bbb"/></svg><div class="t" style="left:819px;top:347.0px;line-height:16px;font-size:12px;color:#fff;letter-spacing:0.04px;font-weight:bold;">Bitmap Parameters</div><svg class="a" style="left:1117px;top:352.5px" width="6" height="6" shape-rendering="crispEdges"><rect x="0" y="0" width="1" height="1" fill="#8a8a8a"/><rect x="0" y="2" width="1" height="1" fill="#8a8a8a"/><rect x="0" y="4" width="1" height="1" fill="#8a8a8a"/><rect x="2" y="0" width="1" height="1" fill="#8a8a8a"/><rect x="2" y="2" width="1" height="1" fill="#8a8a8a"/><rect x="2" y="4" width="1" height="1" fill="#8a8a8a"/><rect x="4" y="0" width="1" height="1" fill="#8a8a8a"/><rect x="4" y="2" width="1" height="1" fill="#8a8a8a"/><rect x="4" y="4" width="1" height="1" fill="#8a8a8a"/></svg>
<div class="t" style="left:809px;top:376px;line-height:16px;font-size:11px;color:#e6e6e6;letter-spacing:-0.18px;">Bitmap:</div>
<div class="a" style="left:849px;top:375px;width:270px;height:18.5px;background:#646464;border:1px solid #585858;border-radius:1px"></div>
<div class="t" style="left:851px;top:376.5px;line-height:16px;font-size:11px;color:#e0e0e0;letter-spacing:-0.02px;">...ultiply_Lamps - Tutorial\2Sided_Assets\paper_02.jpg</div>
<div class="a" style="left:810px;top:401px;width:61.5px;height:18.5px;background:#646464;border-radius:3px;border:1px solid #606060"></div><div class="t" style="left:823.8px;top:402.75px;line-height:16px;font-size:11px;color:#dadada;letter-spacing:-0.14px;">Reload</div>
<div class="a" style="left:948.500px;top:406px;width:173px;height:50px;border:2px solid #3e3e3e;border-radius:3px"></div>
<div class="a" style="left:952px;top:400px;width:100px;height:14px;background:#515151"></div>
<div class="t" style="left:953.5px;top:398.5px;line-height:16px;font-size:11px;color:#e6e6e6;letter-spacing:-0.2px;">Cropping/Placement</div>
<div class="a" style="left:973px;top:428.5px;width:11px;height:11px;background:#606060;border:1px solid #565656"></div>
<div class="t" style="left:985.5px;top:426.5px;line-height:16px;font-size:11px;color:#e6e6e6;letter-spacing:-0.1px;">Apply</div>
<div class="a" style="left:1037px;top:424px;width:72.5px;height:18.5px;background:#646464;border-radius:3px;border:1px solid #606060"></div><div class="t" style="left:1046.2px;top:425.75px;line-height:16px;font-size:11px;color:#dadada;letter-spacing:-0.33px;">View Image</div>
<div class="a" style="left:811.500px;top:440.500px;width:128px;height:20px;border:2px solid #3e3e3e;border-radius:3px"></div>
<div class="a" style="left:815px;top:434px;width:44px;height:14px;background:#515151"></div>
<div class="t" style="left:816px;top:432.5px;line-height:16px;font-size:11px;color:#e6e6e6;letter-spacing:0.21px;">Filtering</div>
<div class="a" style="left:1px;top:450px;width:1141px;height:24px;background:#444"></div>
<div class="a" style="left:797px;top:449px;width:344px;height:1.500px;background:#161616"></div>
<div class="a" style="left:187px;top:450px;width:606px;height:1px;background:#303030"></div>
<div class="a" style="left:2px;top:452px;width:21px;height:20px;background:#5b89cf;border-radius:3px"></div>
<svg class="a" style="left:2px;top:452px" width="21" height="20" viewBox="2 452 21 20"><g fill="#dcdcdc" stroke="#3a3a3a" stroke-width="0.800" stroke-linejoin="round"><path d="M19 461.800c2-.8 2.800.6 2 2.200-.5 1-1.600 1.800-2.600 2z" fill="none" stroke="#dcdcdc" stroke-width="1.300"/><path d="M5.300 460.200l1.200-.6 2.800 2.600c.6-1.500 2-2.300 3.700-2.400v-.9h1.600v.9c2.800.2 5 2 5 4.600 0 1.600-.8 3-2 3.800h-7.600c-1.300-.8-2.200-2-2.400-3.600z"/><rect x="12.400" y="458" width="2.800" height="1.500" rx="0.600"/></g></svg>
<div class="t" style="left:27.5px;top:453.5px;line-height:16px;font-size:10px;color:#eee;letter-spacing:-0.02px;">Rendering finished</div>
<div class="a" style="left:950px;top:453px;width:53px;height:18.500px;background:#646464"></div>
<div class="t" style="left:955px;top:454px;line-height:16px;font-size:11px;color:#e6e6e6;letter-spacing:-0.01px;">95%</div>
<svg class="a" style="left:989px;top:460px" width="8" height="6"><path d="M0.800 0.500h6l-3 4.500z" fill="#eee"/></svg>
<svg class="a" style="left:1008px;top:452px" width="134" height="22" viewBox="1008 452 134 22"><g transform="translate(1010.2 455.6) scale(1.0)" fill="#e4e4e4"><rect x="2.600" y="1.200" width="1.700" height="7" rx="0.850"/><rect x="4.700" y="0" width="1.700" height="8" rx="0.850"/><rect x="6.800" y="0.600" width="1.700" height="7.500" rx="0.850"/><rect x="8.800" y="2.200" width="1.600" height="6.500" rx="0.800"/><path d="M2.600 6.500h7.800v2.500c0 2.500-1.500 4.100-3.500 4.100h-1.400c-1.400 0-2.400-.8-3.200-2.200l-2.100-3.500c-.6-1 .7-1.900 1.500-1l1.500 1.700z"/></g><circle cx="1039" cy="460.200" r="5" fill="none" stroke="#e4e4e4" stroke-width="1.900"/><path d="M1035.600 464l-3.800 4.300" stroke="#e4e4e4" stroke-width="2.400" stroke-linecap="round"/><rect x="1054.500" y="455.500" width="13.500" height="9.500" fill="none" stroke="#e0e0e0" stroke-width="1.100" stroke-dasharray="2.500 1.500"/><circle cx="1060.800" cy="461.800" r="3.300" fill="#444" stroke="#3cc0c4" stroke-width="1.500"/><path d="M1058.500 464.500l-3.500 3.800" stroke="#3cc0c4" stroke-width="1.900" stroke-linecap="round"/><path d="M1077 458.2V455H1080.2M1087.8 455H1091V458.2M1091 465.5V468.7H1087.8M1080.2 468.7H1077V465.5" fill="none" stroke="#e0e0e0" stroke-width="1.200"/><path d="M1084 457.4l4.14 2.2079999999999997v4.508l-4.14 2.392l-4.14-2.392v-4.508z" fill="#e4e4e4"/><path d="M1079.86 459.608l4.14 2.3l4.14-2.3M1084 461.908v4.6" fill="none" stroke="#444" stroke-width="0.900"/><path d="M1099.6 458.2V455H1102.8M1110.8 455H1114V458.2M1114 465.5V468.7H1110.8M1102.8 468.7H1099.6V465.5" fill="none" stroke="#e0e0e0" stroke-width="1.200"/><path d="M1106.8 456.8l4.680000000000001 2.496v5.096l-4.680000000000001 2.704l-4.680000000000001-2.704v-5.096z" fill="#3cc0c4"/><path d="M1102.12 459.296l4.680000000000001 2.6l4.680000000000001-2.6M1106.8 461.896v5.2" fill="none" stroke="#444" stroke-width="0.900"/><path d="M1123 458.2V455H1126.2M1134.0 455H1137.2V458.2M1137.2 465.5V468.7H1134.0M1126.2 468.7H1123V465.5" fill="none" stroke="#e0e0e0" stroke-width="1.200"/><g transform="translate(1124.5 455.4) scale(1.05)" fill="#3cc0c4"><rect x="2.600" y="1.200" width="1.700" height="7" rx="0.850"/><rect x="4.700" y="0" width="1.700" height="8" rx="0.850"/><rect x="6.800" y="0.600" width="1.700" height="7.500" rx="0.850"/><rect x="8.800" y="2.200" width="1.600" height="6.500" rx="0.800"/><path d="M2.600 6.500h7.800v2.500c0 2.500-1.500 4.100-3.500 4.100h-1.400c-1.400 0-2.400-.8-3.200-2.200l-2.100-3.500c-.6-1 .7-1.900 1.500-1l1.500 1.700z"/></g></svg>
<svg class="a" style="left:176px;top:473px" width="400" height="1" shape-rendering="crispEdges"><path d="M1 0.500H254" stroke="#3f6a5e" stroke-width="1" stroke-dasharray="2 5"/><path d="M118 0.500H150" stroke="#4a5a9a" stroke-width="1" stroke-dasharray="3 2"/><path d="M315 0.500H395" stroke="#a0a0a0" stroke-width="1" stroke-dasharray="2 6"/></svg>
</body></html>
